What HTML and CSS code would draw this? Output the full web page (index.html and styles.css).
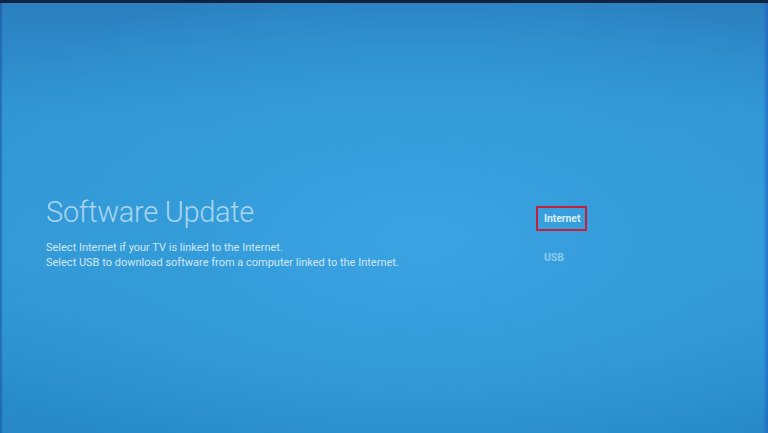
FILE: index.html
```html
<!DOCTYPE html>
<html>
<head>
<meta charset="utf-8">
<link rel="stylesheet" href="styles.css">
</head>
<body>
<div class="screen">
  <div class="topbar"></div>
  <div class="content">
    <div class="info">
      <h1 class="title">Software Update</h1>
      <p class="desc">Select Internet if your TV is linked to the Internet.<br>Select USB to download software from a computer linked to the Internet.</p>
    </div>
    <ul class="options">
      <li class="option selected">Internet</li>
      <li class="option">USB</li>
    </ul>
  </div>
</div>
</body>
</html>
```
FILE: styles.css
```css
html, body {
  margin: 0;
  padding: 0;
  width: 768px;
  height: 433px;
  overflow: hidden;
  font-family: Roboto, "Liberation Sans", sans-serif;
}
.screen {
  width: 768px;
  height: 433px;
  display: flex;
  flex-direction: column;
  background:
    linear-gradient(to right, rgba(20,60,150,0.55) 0, rgba(20,60,150,0) 3px, rgba(20,60,150,0) 763px, rgba(30,90,190,0.6) 768px),
    radial-gradient(ellipse 70% 60% at 55% 55%, #3ba4e2 0%, #349bd9 45%, rgba(52,155,217,0) 100%),
    linear-gradient(to bottom, #2a7fbe 0%, #3195d3 25%, #3399d7 60%, #2688c6 100%);
}
.topbar {
  height: 3px;
  background: #12233d;
  flex: none;
}
.content {
  display: flex;
  padding: 192px 0 0 46px;
}
.info {
  width: 490px;
}
.title {
  margin: 0;
  font-weight: 300;
  font-size: 29px;
  line-height: 34px;
  color: #a9d5f1;
  letter-spacing: -0.3px;
}
.desc {
  margin: 11px 0 0;
  font-size: 11px;
  line-height: 15px;
  color: #cfe7f7;
}
.options {
  list-style: none;
  margin: 11px 0 0;
  padding: 0;
  display: flex;
  flex-direction: column;
  gap: 14px;
}
.option {
  width: 51px;
  height: 25px;
  box-sizing: border-box;
  padding: 0 0 0 6px;
  font-size: 10.5px;
  font-weight: 700;
  line-height: 21px;
  color: #8ccbef;
  border: 2px solid transparent;
  letter-spacing: -0.1px;
}
.option.selected {
  border-color: #c42038;
  color: #d6ecfa;
}
```
